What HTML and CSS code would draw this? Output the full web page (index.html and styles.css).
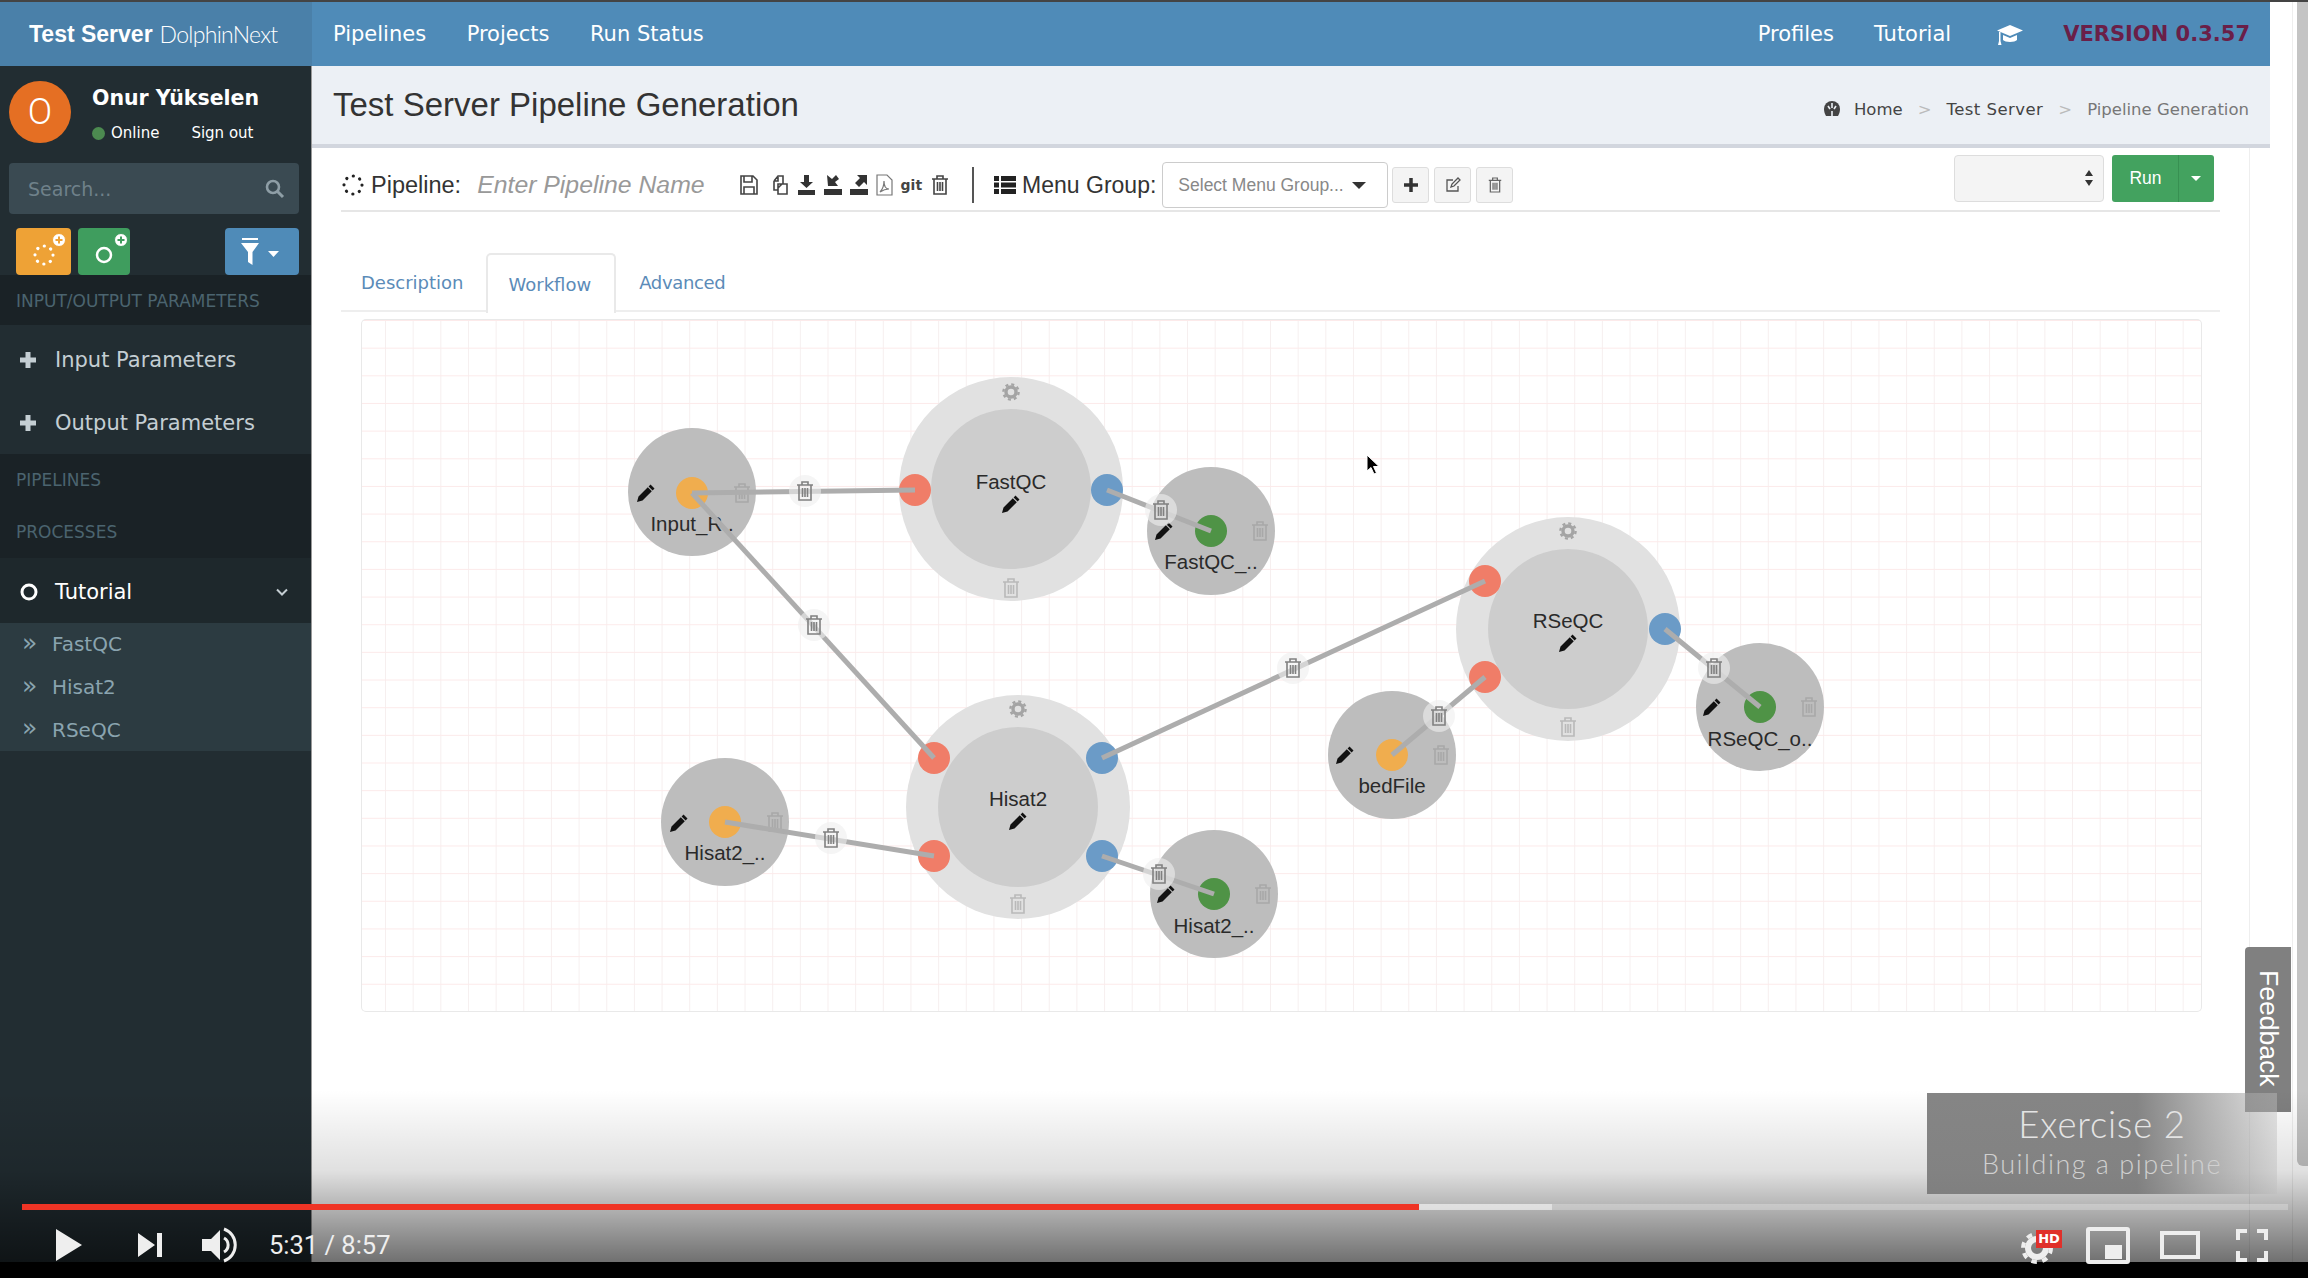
FILE: index.html
```html
<!DOCTYPE html>
<html lang="en">
<head>
    <meta charset="UTF-8">
    <title>Test Server Pipeline Generation</title>
    <link rel="stylesheet" href="styles.css">
</head>
<body>

<!-- shared icons, all centred on 0,0 -->
<svg class="defs" width="0" height="0">
    <defs>
        <g id="trash" fill="none" stroke="currentColor" stroke-width="1.6"><path d="M-8 -6H8M-3 -6V-9H3V-6M-6 -6V9H6V-6M-2.5 -3V6M0 -3V6M2.5 -3V6"/></g>
        <path id="pencil" fill="currentColor" d="M4.5 -8.5 8.5 -4.5 6.6 -2.6 2.6 -6.6ZM1.8 -5.8 5.8 -1.8 -3.5 7.5 -9 9 -7.5 3.5Z"/>
        <g id="gear" fill="none" stroke="currentColor"><circle r="5" stroke-width="3.4"/><circle r="7.6" stroke-width="2.4" stroke-dasharray="3 2.97"/></g>
        <g id="plusbadge"><circle r="6.5" fill="#fff"/><path d="M-3.5 0H3.5M0 -3.5V3.5" stroke-width="2"/></g>
        <circle id="dots" r="9" fill="none" stroke="currentColor" stroke-width="3.2" stroke-linecap="round" stroke-dasharray="0.1 6.97"/>
    </defs>
</svg>

<div class="frame">
    <div class="app">
        <header class="navbar">
            <a class="brand"><b>Test Server</b> <span>DolphinNext</span></a>
            <nav class="nav-left">
                <a>Pipelines</a>
                <a>Projects</a>
                <a>Run Status</a>
            </nav>
            <nav class="nav-right">
                <a>Profiles</a>
                <a>Tutorial</a>
                <svg class="cap" viewBox="0 0 26 24"><path fill="#fff" d="M13 3 26 8.5 13 14 0 8.5ZM6 13l7 3 7-3v5c-2 2.500-12 2.500-14 0ZM2 10h1.500v9l1 4H1l1-4Z"/></svg>
                <span class="version">VERSION 0.3.57</span>
            </nav>
        </header>

        <div class="columns">
            <aside class="sidebar">
                <div class="user-panel">
                    <div class="avatar">O</div>
                    <div class="user-info">
                        <div class="user-name">Onur Yükselen</div>
                        <div class="user-links">
                            <span class="dot"></span><span>Online</span><span class="signout">Sign out</span>
                        </div>
                    </div>
                </div>
                <div class="search">
                    <span>Search...</span>
                    <svg width="20" height="20" viewBox="0 0 20 20"><circle cx="8" cy="8" r="6" fill="none" stroke="#8e9ea6" stroke-width="2.6"/><path d="M12.500 12.500 18 18" stroke="#8e9ea6" stroke-width="3"/></svg>
                </div>
                <div class="side-buttons">
                    <button class="side-btn orange">
                        <svg width="55" height="47" viewBox="0 0 55 47"><use href="#dots" x="28" y="27" color="#fff"/><use href="#plusbadge" x="43" y="12" stroke="#eea236"/></svg>
                    </button>
                    <button class="side-btn green">
                        <svg width="52" height="47" viewBox="0 0 52 47"><circle cx="26" cy="27" r="7" fill="none" stroke="#fff" stroke-width="2.500"/><use href="#plusbadge" x="43" y="12" stroke="#3f9d5e"/></svg>
                    </button>
                    <button class="side-btn blue">
                        <svg width="44" height="30" viewBox="0 0 44 30"><path fill="#fff" d="M2 1H18V3H2ZM1 6H19L12.500 15V28L8 25V15Z"/><path fill="#fff" d="M28 14H39L33.500 20Z"/></svg>
                    </button>
                </div>

                <div class="side-label first">INPUT/OUTPUT PARAMETERS</div>
                <div class="side-group">
                    <div class="side-item"><svg class="plus" width="16" height="16" viewBox="0 0 16 16"><path d="M0 8H16M8 0V16" stroke="#c4ced3" stroke-width="5"/></svg>Input Parameters</div>
                    <div class="side-item"><svg class="plus" width="16" height="16" viewBox="0 0 16 16"><path d="M0 8H16M8 0V16" stroke="#c4ced3" stroke-width="5"/></svg>Output Parameters</div>
                </div>
                <div class="side-label">PIPELINES</div>
                <div class="side-label">PROCESSES</div>
                <div class="side-item active">
                    <svg class="plus ring-icon" width="18" height="18" viewBox="0 0 18 18"><circle cx="9" cy="9" r="7" fill="none" stroke="#fff" stroke-width="3"/></svg>Tutorial
                    <svg class="chevron" width="12" height="8" viewBox="0 0 12 8"><path d="M1 1.500 6 6.500 11 1.500" fill="none" stroke="#c4ced3" stroke-width="2"/></svg>
                </div>
                <ul class="submenu">
                    <li><span class="chev">»</span>FastQC</li>
                    <li><span class="chev">»</span>Hisat2</li>
                    <li><span class="chev">»</span>RSeQC</li>
                </ul>
            </aside>

            <main class="main">
                <section class="page-head">
                    <h1>Test Server Pipeline Generation</h1>
                    <div class="breadcrumb">
                        <svg width="18" height="18" viewBox="0 0 18 18"><path fill="#444" d="M9 1a8 8 0 0 1 8 8c0 3-1 5-2 7H3c-1-2-2-4-2-7a8 8 0 0 1 8-8Z"/><path d="M9 3V8M5 6 7 9M13 6 11 9M9 11V16" stroke="#ecf0f5" stroke-width="1.600"/></svg>
                        <a>Home</a><i>&gt;</i><a>Test Server</a><i>&gt;</i><span>Pipeline Generation</span>
                    </div>
                </section>

                <div class="content">
                    <div class="toolbar">
                        <svg class="spin" width="24" height="24" viewBox="-12 -12 24 24"><use href="#dots" color="#222"/></svg>
                        <span class="lbl">Pipeline:</span>
                        <span class="pipe-name">Enter Pipeline Name</span>
                        <div class="tool-icons">
                            <svg width="20" height="22" viewBox="0 0 20 22"><path d="M2 2H14L18 6V20H2ZM5 2V8H13V2M5 20V13H15V20" fill="none" stroke="#444" stroke-width="1.600"/></svg>
                            <svg width="22" height="22" viewBox="0 0 22 22"><path d="M7 7 11 2H16V10M7 7V16H11M7 7H11V3M11 10H20V20H11ZM11 14 15 10" fill="none" stroke="#444" stroke-width="1.600"/></svg>
                            <svg width="19" height="22" viewBox="0 0 19 22"><path fill="#333" d="M7 1H12V8H16L9.500 14 3 8H7ZM1 16H18V21H1Z"/></svg>
                            <svg width="18" height="22" viewBox="0 0 18 22"><path fill="#333" d="M3 1 8 5 12 1 15 5 11 8 14 12H4ZM0 15H18V21H0Z"/></svg>
                            <svg width="18" height="22" viewBox="0 0 18 22"><path fill="#333" d="M7 1H17V11L14 8 9 13 5 9 10 4ZM0 15H18V21H0Z"/></svg>
                            <svg width="17" height="22" viewBox="0 0 17 22"><path d="M1 1H11L16 6V21H1ZM4 18C7 15 8 11 8 7 8 12 10 15 13 15 10 15 7 16 4 18Z" fill="none" stroke="#777" stroke-width="1.200"/></svg>
                            <b class="git">git</b>
                            <svg class="tool-trash" width="20" height="24" viewBox="-10 -12 20 24"><use href="#trash" color="#444"/></svg>
                        </div>
                        <span class="divider"></span>
                        <svg class="list" width="22" height="18" viewBox="0 0 22 18"><path fill="#222" d="M0 0H5V5H0ZM7 0H22V5H7ZM0 6.500H5V11.500H0ZM7 6.500H22V11.500H7ZM0 13H5V18H0ZM7 13H22V18H7Z"/></svg>
                        <span class="lbl">Menu Group:</span>
                        <div class="menu-select"><span>Select Menu Group...</span><em></em></div>
                        <button class="mini"><svg width="16" height="16" viewBox="0 0 16 16"><path d="M1 8H15M8 1V15" stroke="#333" stroke-width="3.500"/></svg></button>
                        <button class="mini"><svg width="16" height="16" viewBox="0 0 16 16"><path d="M13 9V14H2V3H8M6 10 7 7 13 1 15 3 9 9Z" fill="none" stroke="#555" stroke-width="1.300"/></svg></button>
                        <button class="mini"><svg width="14" height="18" viewBox="-9 -10 18 20"><use href="#trash" color="#666"/></svg></button>
                        <div class="run-group">
                            <div class="profile-select"><svg width="10" height="18" viewBox="0 0 10 18"><path fill="#333" d="M5 1 9 7H1ZM5 17 1 11H9Z"/></svg></div>
                            <div class="run-btn"><span>Run</span><em></em></div>
                        </div>
                    </div>

                    <div class="tabs">
                        <a class="tab">Description</a>
                        <a class="tab on">Workflow</a>
                        <a class="tab">Advanced</a>
                    </div>

                    <div class="canvas">
                        <svg class="graph" width="1839" height="691" viewBox="362 320 1839 691">
                            <g class="ring">
                                <circle cx="1011" cy="489" r="112"/>
                                <circle cx="1018" cy="807" r="112"/>
                                <circle cx="1568" cy="629" r="112"/>
                            </g>
                            <g class="core">
                                <circle cx="1011" cy="489" r="80"/>
                                <circle cx="1018" cy="807" r="80"/>
                                <circle cx="1568" cy="629" r="80"/>
                            </g>
                            <g class="io">
                                <circle cx="692" cy="492" r="64"/>
                                <circle cx="1211" cy="531" r="64"/>
                                <circle cx="725" cy="822" r="64"/>
                                <circle cx="1214" cy="894" r="64"/>
                                <circle cx="1392" cy="755" r="64"/>
                                <circle cx="1760" cy="707" r="64"/>
                            </g>

                            <g class="dim-big">
                                <use href="#gear" x="1011" y="392"/><use href="#trash" x="1011" y="588"/>
                                <use href="#gear" x="1018" y="709"/><use href="#trash" x="1018" y="904"/>
                                <use href="#gear" x="1568" y="531"/><use href="#trash" x="1568" y="727"/>
                            </g>
                            <g class="dim-small">
                                <use href="#trash" x="742" y="493"/>
                                <use href="#trash" x="1260" y="531"/>
                                <use href="#trash" x="775" y="822"/>
                                <use href="#trash" x="1263" y="894"/>
                                <use href="#trash" x="1441" y="755"/>
                                <use href="#trash" x="1809" y="707"/>
                            </g>
                            <g class="pencils">
                                <use href="#pencil" x="646" y="493"/>
                                <use href="#pencil" x="1011" y="504"/>
                                <use href="#pencil" x="1164" y="531"/>
                                <use href="#pencil" x="679" y="823"/>
                                <use href="#pencil" x="1018" y="821"/>
                                <use href="#pencil" x="1166" y="894"/>
                                <use href="#pencil" x="1345" y="755"/>
                                <use href="#pencil" x="1568" y="643"/>
                                <use href="#pencil" x="1712" y="707"/>
                            </g>

                            <g class="names">
                                <text x="692" y="531">Input_R..</text>
                                <text x="1011" y="489">FastQC</text>
                                <text x="1211" y="569">FastQC_..</text>
                                <text x="725" y="860">Hisat2_..</text>
                                <text x="1018" y="806">Hisat2</text>
                                <text x="1214" y="933">Hisat2_..</text>
                                <text x="1392" y="793">bedFile</text>
                                <text x="1568" y="628">RSeQC</text>
                                <text x="1760" y="746">RSeQC_o..</text>
                            </g>

                            <circle class="p-in" cx="692" cy="493" r="16"/>
                            <circle class="p-in" cx="725" cy="822" r="16"/>
                            <circle class="p-in" cx="1392" cy="755" r="16"/>
                            <circle class="p-out" cx="1211" cy="531" r="16"/>
                            <circle class="p-out" cx="1214" cy="894" r="16"/>
                            <circle class="p-out" cx="1760" cy="707" r="16"/>
                            <circle class="p-red" cx="915" cy="490" r="16"/>
                            <circle class="p-red" cx="934" cy="758" r="16"/>
                            <circle class="p-red" cx="934" cy="856" r="16"/>
                            <circle class="p-red" cx="1485" cy="581" r="16"/>
                            <circle class="p-red" cx="1485" cy="677" r="16"/>
                            <circle class="p-blue" cx="1107" cy="490" r="16"/>
                            <circle class="p-blue" cx="1102" cy="758" r="16"/>
                            <circle class="p-blue" cx="1102" cy="856" r="16"/>
                            <circle class="p-blue" cx="1665" cy="629" r="16"/>

                            <g class="links">
                                <path d="M692 493 915 490"/>
                                <path d="M692 493 934 758"/>
                                <path d="M725 822 934 856"/>
                                <path d="M1107 490 1211 531"/>
                                <path d="M1102 856 1214 894"/>
                                <path d="M1102 758 1485 581"/>
                                <path d="M1392 755 1485 677"/>
                                <path d="M1665 629 1760 707"/>
                            </g>

                            <g class="halo">
                                <circle cx="805" cy="491" r="16"/>
                                <circle cx="814" cy="625" r="16"/>
                                <circle cx="1161" cy="510" r="16"/>
                                <circle cx="831" cy="838" r="16"/>
                                <circle cx="1159" cy="874" r="16"/>
                                <circle cx="1293" cy="668" r="16"/>
                                <circle cx="1439" cy="716" r="16"/>
                                <circle cx="1714" cy="668" r="16"/>
                            </g>
                            <g class="link-trash">
                                <use href="#trash" x="805" y="491"/>
                                <use href="#trash" x="814" y="625"/>
                                <use href="#trash" x="1161" y="510"/>
                                <use href="#trash" x="831" y="838"/>
                                <use href="#trash" x="1159" y="874"/>
                                <use href="#trash" x="1293" y="668"/>
                                <use href="#trash" x="1439" y="716"/>
                                <use href="#trash" x="1714" y="668"/>
                            </g>
                        </svg>
                    </div>
                </div>
            </main>
        </div>
    </div>
    <div class="scrollbar"><div class="thumb"></div></div>
</div>
<div class="blackbar"></div>

<!-- things that sit over the page -->
<svg class="cursor" width="14" height="22" viewBox="0 0 14 22"><path d="M1 1V17L5 13.500 8 20 10.500 19 7.500 12.500H13Z" fill="#000" stroke="#fff"/></svg>
<div class="feedback">Feedback</div>

<div class="player">
    <div class="progress">
        <div class="buffered"></div>
        <div class="played"></div>
    </div>
    <div class="controls">
        <svg class="c-play" width="26" height="32" viewBox="0 0 26 32"><path fill="#eee" d="M0 0 26 16 0 32Z"/></svg>
        <svg class="c-next" width="24" height="24" viewBox="0 0 24 24"><path fill="#eee" d="M0 0 17 12 0 24ZM19 0H24V24H19Z"/></svg>
        <svg class="c-vol" width="36" height="36" viewBox="0 0 36 36"><path fill="#eee" d="M0 12H9L18 3V33L9 24H0Z"/><path fill="none" stroke="#eee" stroke-width="3" d="M22 11a8 8 0 0 1 0 14M22 2a17 17 0 0 1 0 32"/></svg>
        <span class="c-time">5:31 / 8:57</span>
        <div class="c-right">
            <div class="c-gear">
                <svg width="34" height="34" viewBox="-17 -17 34 34"><g fill="none" stroke="#eee"><circle r="9" stroke-width="6"/><circle r="14" stroke-width="4" stroke-dasharray="5.500 5.500"/></g></svg>
                <span class="hd">HD</span>
            </div>
            <div class="c-mini"><i></i></div>
            <div class="c-theater"></div>
            <svg class="c-full" width="32" height="33" viewBox="0 0 32 33"><path fill="none" stroke="#eee" stroke-width="4" d="M2 11V2H11M21 2H30V11M2 22V31H11M21 31H30V22"/></svg>
        </div>
    </div>
</div>

<div class="exercise">
    <div class="ex-title">Exercise 2</div>
    <div class="ex-sub">Building a pipeline</div>
</div>

</body>
</html>
```

FILE: styles.css
```css
* {
    box-sizing: border-box;
}

html, body {
    margin: 0;
    height: 1278px;
    overflow: hidden;
}

body {
    position: relative;
    font-family: "DejaVu Sans", sans-serif;
    background: #fff;
    color: #333;
}

.defs {
    position: absolute;
}

svg {
    display: block;
}

.frame {
    display: flex;
    height: 1262px;
    overflow: hidden;
    border-top: 2px solid #444;
}

.blackbar {
    height: 16px;
    background: #000;
}

.app {
    width: 2292px;
    display: flex;
    flex-direction: column;
}

/* top bar */
.navbar {
    width: 2270px;
    height: 64px;
    flex: none;
    display: flex;
    align-items: center;
    background: #4f8bb8;
    color: #fff;
}

.brand {
    width: 312px;
    height: 100%;
    padding-left: 29px;
    display: flex;
    align-items: center;
    gap: 7px;
    background: #4a80a9;
    font-family: "Liberation Sans", sans-serif;
    font-size: 23px;
}

.brand span {
    font-family: "Lato", sans-serif;
    font-weight: 300;
    letter-spacing: -0.7px;
}

.nav-left {
    display: flex;
    gap: 40.5px;
    margin-left: 21px;
    font-size: 21px;
}

.nav-right {
    display: flex;
    align-items: center;
    gap: 40px;
    margin-left: auto;
    padding-right: 20px;
    font-size: 21px;
}

.cap {
    width: 26px;
    height: 24px;
    margin-left: 6px;
}

.version {
    font-size: 21px;
    font-weight: bold;
    color: #6a1f48;
}

.columns {
    flex: 1;
    display: flex;
    min-height: 0;
}

/* left column */
.sidebar {
    width: 312px;
    flex: none;
    background: #222d32;
    border-right: 1px solid #999;
    color: #c4ced3;
}

.user-panel {
    display: flex;
    height: 97px;
    padding: 15px 0 0 9px;
}

.avatar {
    width: 62px;
    height: 62px;
    border-radius: 50%;
    background: #e56f23;
    color: #fff;
    font-size: 36px;
    font-family: "Roboto", sans-serif;
    font-weight: 300;
    display: flex;
    align-items: center;
    justify-content: center;
}

.user-info {
    margin-left: 21px;
}

.user-name {
    font-size: 20.5px;
    font-weight: bold;
    color: #fff;
    line-height: 24px;
    margin-top: 5px;
}

.user-links {
    display: flex;
    align-items: center;
    margin-top: 14px;
    font-size: 15px;
    color: #fff;
}

.dot {
    width: 13px;
    height: 13px;
    border-radius: 50%;
    background: #4c8a50;
    margin-right: 6px;
}

.signout {
    margin-left: 32px;
}

.search {
    height: 51px;
    margin: 0 12px 0 9px;
    padding: 0 14px 0 19px;
    display: flex;
    align-items: center;
    justify-content: space-between;
    background: #3a4a52;
    border-radius: 4px;
    font-size: 19px;
    color: #6f818a;
}

.side-buttons {
    display: flex;
    gap: 7px;
    height: 47px;
    margin-top: 14px;
    padding: 0 12px 0 16px;
}

.side-btn {
    padding: 0;
    border: 0;
    border-radius: 4px;
    display: flex;
    align-items: center;
    justify-content: center;
}

.orange {
    width: 55px;
    background: #eea236;
}

.green {
    width: 52px;
    background: #3f9d5e;
}

.blue {
    width: 74px;
    margin-left: auto;
    background: #4f8bb8;
}

.side-label {
    height: 52px;
    padding-left: 16px;
    display: flex;
    align-items: center;
    background: #1a2226;
    font-size: 17px;
    color: #4b646f;
}

.side-label.first {
    height: 50px;
    padding-top: 2px;
}

.side-group {
    padding-top: 4px;
}

.side-item {
    height: 62.5px;
    padding-left: 20px;
    display: flex;
    align-items: center;
    font-size: 21px;
}

.plus {
    margin-right: 19px;
}

.ring-icon {
    margin-right: 17px;
}

.side-item.active {
    height: 65px;
    padding-top: 2px;
    background: #1e282c;
    color: #fff;
}

.chevron {
    margin-left: auto;
    margin-right: 23px;
}

.submenu {
    margin: 0;
    padding: 0;
    list-style: none;
    background: #2c3b41;
    color: #8aa4af;
    font-size: 20px;
}

.submenu li {
    height: 42.7px;
    padding-left: 22px;
    display: flex;
    align-items: center;
}

.chev {
    width: 30px;
    font-size: 25px;
    line-height: 1;
    margin-top: -4px;
}

/* main column */
.main {
    width: 1958px;
    flex: none;
    display: flex;
    flex-direction: column;
}

.page-head {
    height: 82px;
    flex: none;
    padding: 0 21px;
    display: flex;
    align-items: center;
    justify-content: space-between;
    background: #ecf0f5;
    border-bottom: 4px solid #d2d6de;
}

.page-head h1 {
    margin: 0;
    font-family: "Liberation Sans", sans-serif;
    font-size: 33px;
    font-weight: normal;
    color: #333;
}

.breadcrumb {
    display: flex;
    align-items: center;
    margin-top: 8px;
    font-size: 16.5px;
    color: #444;
}

.breadcrumb a {
    margin-left: 13px;
}

.breadcrumb i {
    margin: 0 15px;
    font-style: normal;
    color: #bbb;
}

.breadcrumb i + a {
    margin-left: 0;
    letter-spacing: 0.45px;
}

.breadcrumb span {
    color: #777;
}

.content {
    width: 1938px;
    flex: 1;
    padding: 0 29px;
    border-right: 1px solid #eee;
    font-family: "Liberation Sans", sans-serif;
}

.toolbar {
    height: 64px;
    padding-top: 12px;
    display: flex;
    align-items: center;
    border-bottom: 2px solid #e6e6e6;
}

.spin {
    margin: 0 6px 0 0;
}

.lbl {
    font-size: 23px;
    color: #333;
}

.toolbar > .lbl:nth-child(2) {
    font-size: 23.5px;
}

.pipe-name {
    margin-left: 16px;
    font-size: 24.8px;
    font-style: italic;
    color: #999;
}

.tool-icons {
    display: flex;
    align-items: center;
    gap: 8px;
    margin-left: 34px;
}

.git {
    font-family: "DejaVu Sans", sans-serif;
    font-size: 14px;
    color: #444;
}

.divider {
    width: 2px;
    height: 36px;
    margin: 0 20px 0 22px;
    background: #555;
}

.list {
    margin-right: 6px;
}

.menu-select {
    width: 226px;
    height: 46px;
    margin: 0 4px 0 6px;
    padding: 0 15px;
    display: flex;
    align-items: center;
    gap: 8px;
    border: 1px solid #ccc;
    border-radius: 4px;
    font-size: 17.5px;
    color: #888;
}

.menu-select em {
    border: 7px solid transparent;
    border-top-color: #333;
    border-bottom: 0;
}

.mini {
    width: 37px;
    height: 36px;
    margin-right: 5px;
    padding: 0;
    display: flex;
    align-items: center;
    justify-content: center;
    background: #f4f4f4;
    border: 1px solid #ddd;
    border-radius: 3px;
}

.run-group {
    display: flex;
    gap: 8px;
    margin-left: auto;
    margin-right: 6px;
    margin-bottom: 14px;
}

.profile-select {
    width: 150px;
    height: 47px;
    padding-right: 9px;
    display: flex;
    align-items: center;
    justify-content: flex-end;
    background: #f4f4f4;
    border: 1px solid #ddd;
    border-radius: 4px;
}

.run-btn {
    width: 102px;
    height: 47px;
    display: flex;
    align-items: center;
    background: linear-gradient(90deg, #43a25f 66px, #389052 66px, #389052 67px, #43a25f 67px);
    border-radius: 3px;
    color: #fff;
    font-size: 17.5px;
}

.run-btn span {
    width: 67px;
    text-align: center;
}

.run-btn em {
    margin-left: 12px;
    border: 5px solid transparent;
    border-top-color: #fff;
    border-bottom: 0;
}

.tabs {
    height: 59px;
    margin-top: 41px;
    display: flex;
    border-bottom: 2px solid #eee;
    color: #5b8bb8;
    font-size: 18px;
    font-family: "DejaVu Sans", sans-serif;
}

.tab {
    padding: 0 21px 3px;
    height: 59px;
    display: flex;
    align-items: center;
    border: 2px solid transparent;
    border-bottom: 0;
    margin-right: 0;
}

.tab:first-child {
    padding: 0 20px 3px 18px;
}

.tab:last-child {
    letter-spacing: -0.35px;
}

.tab.on {
    background: #fff;
    border-color: #e9e9e9;
    border-radius: 5px 5px 0 0;
    padding: 0 23px 0 21px;
    height: 60px;
    position: relative;
}

/* the workflow board */
.canvas {
    position: relative;
    width: 1839px;
    height: 691px;
    margin: 8px 0 0 21px;
    border-radius: 4px;
    box-shadow: 0 0 0 1px #e9e9e9;
    background-color: #fff;
    background-image:
        linear-gradient(#fceaea 1px, transparent 1px),
        linear-gradient(90deg, #f6efef 1px, transparent 1px);
    background-size: 27.67px 27.67px;
    background-position: 23px 0;
}

.graph {
    position: absolute;
    top: 0;
    left: 0;
}

.ring circle { fill: #e1e1e1; }
.core circle { fill: #cdcdcd; }
.io circle { fill: #bdbdbd; }
.dim-big { color: #b9b9b9; }
.dim-big use[href="#gear"] { color: #a4a4a4; }
.dim-small { color: #a8a8a8; }
.pencils { color: #111; }
.p-in { fill: #f0ad4e; }
.p-out { fill: #4f9346; }
.p-red { fill: #f07d68; }
.p-blue { fill: #6b9bc7; }

.names text {
    font-family: "Liberation Sans", sans-serif;
    font-size: 20.5px;
    fill: #2a2a2a;
    text-anchor: middle;
}

.links path {
    fill: none;
    stroke: #adadad;
    stroke-width: 5;
}

.halo circle {
    fill: #eee;
    fill-opacity: 0.6;
}

.link-trash {
    color: #808080;
}

/* scrollbar of the page */
.scrollbar {
    width: 16px;
    flex: none;
    padding-left: 4px;
    border-left: 1px solid #eee;
}

.thumb {
    height: 1164px;
    background: #c4c4c4;
    border-radius: 0 0 0 6px;
}

.cursor {
    position: absolute;
    left: 1366px;
    top: 454px;
}

.feedback {
    position: absolute;
    left: 2245px;
    top: 947px;
    width: 46px;
    height: 165px;
    padding-top: 23px;
    display: flex;
    align-items: center;
    justify-content: flex-start;
    writing-mode: vertical-rl;
    background: #808080;
    border-radius: 4px 0 0 0;
    color: #fff;
    font-family: "Liberation Sans", sans-serif;
    font-size: 26.5px;
}

/* video player chrome */
.player {
    position: absolute;
    left: 0;
    right: 0;
    top: 1090px;
    height: 172px;
    background: linear-gradient(rgba(0, 0, 0, 0), rgba(0, 0, 0, 0.12) 47%, rgba(0, 0, 0, 0.56));
}

.progress {
    position: absolute;
    left: 22px;
    top: 114px;
    width: 2266px;
    height: 6px;
    background: rgba(255, 255, 255, 0.25);
}

.buffered, .played {
    position: absolute;
    top: 0;
    left: 0;
    height: 100%;
}

.buffered {
    width: 1530px;
    background: rgba(255, 255, 255, 0.45);
}

.played {
    width: 1397px;
    background: #ef3425;
}

.controls {
    position: absolute;
    left: 0;
    right: 0;
    top: 137px;
    height: 36px;
    display: flex;
    align-items: center;
}

.c-play {
    margin-left: 56px;
}

.c-next {
    margin-left: 56px;
}

.c-vol {
    margin-left: 40px;
}

.c-time {
    margin-left: 31px;
    font-family: "Roboto", sans-serif;
    font-size: 25.5px;
    color: #eee;
}

.c-right {
    margin-left: auto;
    margin-right: 40px;
    display: flex;
    align-items: center;
}

.c-gear {
    position: relative;
    width: 34px;
    height: 36px;
    overflow: visible;
}

.c-gear svg {
    margin-top: 4px;
}

.hd {
    position: absolute;
    left: 16px;
    top: 3px;
    width: 26px;
    height: 18px;
    background: #e0302a;
    color: #fff;
    font: bold 13px/18px "DejaVu Sans", sans-serif;
    text-align: center;
}

.c-mini {
    position: relative;
    width: 44px;
    height: 37px;
    margin-left: 32px;
    border: 4px solid #eee;
    border-radius: 3px;
}

.c-mini i {
    position: absolute;
    right: 4px;
    bottom: 1px;
    width: 17px;
    height: 14px;
    background: #eee;
}

.c-theater {
    width: 40px;
    height: 28px;
    margin-left: 30px;
    border: 4px solid #eee;
}

.c-full {
    margin-left: 36px;
}

.exercise {
    position: absolute;
    left: 1927px;
    top: 1093px;
    width: 350px;
    height: 101px;
    text-align: center;
    background: linear-gradient(90deg, rgba(120, 120, 120, 0.9) 60%, rgba(150, 150, 150, 0.7) 80%, rgba(190, 190, 190, 0.45));
    font-family: "Lato", sans-serif;
}

.ex-title {
    margin-top: 7px;
    font-size: 36.5px;
    line-height: 48px;
    letter-spacing: 0.8px;
    color: #e4e4e4;
    font-weight: 300;
}

.ex-sub {
    font-size: 27px;
    line-height: 32px;
    letter-spacing: 1.5px;
    color: #d0d0d0;
    font-weight: 300;
}
```
